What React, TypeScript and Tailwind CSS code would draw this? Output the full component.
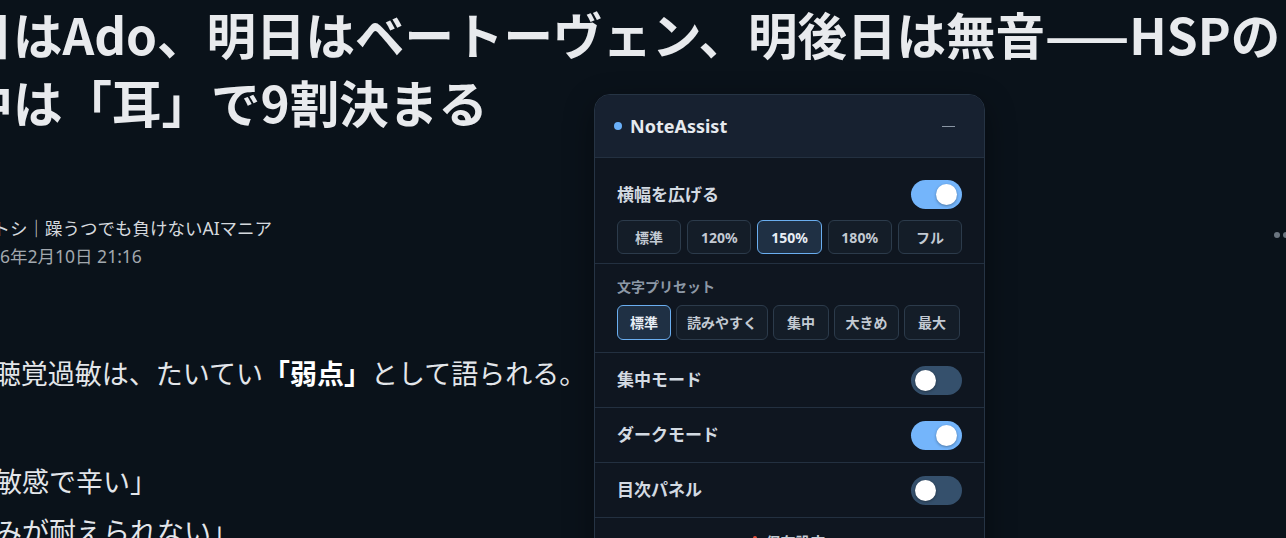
import { useState } from 'react';

const cjk = { fontFamily: '"Noto Sans CJK JP", "Noto Sans", sans-serif' };
const ui = { fontFamily: '"Noto Sans", "Noto Sans CJK JP", sans-serif' };

function Toggle({ on, onClick }: { on: boolean; onClick: () => void }) {
  return (
    <button
      onClick={onClick}
      className={`relative h-[29px] w-[51px] shrink-0 rounded-full ${on ? 'bg-[#74b5fb]' : 'bg-[#35506c]'}`}
    >
      <span
        className={`absolute top-[4px] h-[21px] w-[21px] rounded-full bg-white shadow-[0_1px_3px_rgba(0,0,0,0.35)] ${on ? 'right-[5px]' : 'left-[4px]'}`}
      />
    </button>
  );
}

const widths = ['標準', '120%', '150%', '180%', 'フル'];
const presets = ['標準', '読みやすく', '集中', '大きめ', '最大'];

function NoteAssist() {
  const [wide, setWide] = useState(true);
  const [width, setWidth] = useState('150%');
  const [preset, setPreset] = useState('標準');
  const [focus, setFocus] = useState(false);
  const [dark, setDark] = useState(true);
  const [toc, setToc] = useState(false);

  const rows = [
    { label: '集中モード', on: focus, set: setFocus },
    { label: 'ダークモード', on: dark, set: setDark },
    { label: '目次パネル', on: toc, set: setToc },
  ];

  return (
    <div
      className="absolute left-[594px] top-[94px] w-[391px] overflow-hidden rounded-[16px] border border-[#263444] bg-[#0f1620] shadow-[0_10px_30px_rgba(0,0,0,0.4)]"
      style={ui}
    >
      <div className="flex h-[63px] items-center justify-between border-b border-[#233040] bg-[#172130] pl-[19px] pr-[29px]">
        <div className="flex items-center gap-[8px]">
          <span className="h-[8px] w-[8px] rounded-full bg-[#6ab0f9]" />
          <span className="text-[18px] font-bold text-[#e6eaef]">NoteAssist</span>
        </div>
        <span className="h-px w-[13px] bg-[#8a96a4]" />
      </div>

      <div className="border-b border-[#233040] px-[22px] pb-[9px] pt-[22px]">
        <div className="flex items-center justify-between">
          <span className="text-[17px] font-semibold text-[#d3dae2]">横幅を広げる</span>
          <Toggle on={wide} onClick={() => setWide(!wide)} />
        </div>
        <div className="mt-[11px] grid grid-cols-5 gap-[6px]">
          {widths.map((w) => (
            <button
              key={w}
              onClick={() => setWidth(w)}
              className={`h-[34px] rounded-[6px] border text-[14px] font-bold ${
                width === w
                  ? 'border-[#6aaef0] bg-[#1f3044] text-[#e8eef5]'
                  : 'border-[#2c3b4b] bg-[#141d28] text-[#c3cad3]'
              }`}
            >
              {w}
            </button>
          ))}
        </div>
      </div>

      <div className="border-b border-[#233040] px-[22px] pb-[12px] pt-[12px]">
        <div className="text-[14px] font-semibold text-[#8d98a6]">文字プリセット</div>
        <div className="mt-[8px] grid grid-cols-[54px_92px_56px_65px_56px] gap-[5px]">
          {presets.map((p) => (
            <button
              key={p}
              onClick={() => setPreset(p)}
              className={`h-[35px] rounded-[6px] border text-[14px] font-bold ${
                preset === p
                  ? 'border-[#6aaef0] bg-[#1f3044] text-[#e8eef5]'
                  : 'border-[#2c3b4b] bg-[#141d28] text-[#c3cad3]'
              }`}
            >
              {p}
            </button>
          ))}
        </div>
      </div>

      {rows.map((r) => (
        <div
          key={r.label}
          className="flex h-[55px] items-center justify-between border-b border-[#233040] px-[22px]"
        >
          <span className="text-[17px] font-semibold text-[#d3dae2]">{r.label}</span>
          <Toggle on={r.on} onClick={() => r.set(!r.on)} />
        </div>
      ))}

      <div className="flex items-start justify-center gap-[8px] pb-[16px] pt-[13px]">
        <span className="mt-[5px] h-[10px] w-[4px] rounded-full bg-[#e0503a]" />
        <span className="text-[15px] font-semibold text-[#c3cad3]">保存設定</span>
      </div>
    </div>
  );
}

export default function App() {
  return (
    <div className="relative h-[538px] w-[1286px] overflow-hidden bg-[#0a121a]" style={cjk}>
      <article className="-ml-[86px] w-[1386px]">
        <h1 className="text-[49.5px] font-bold leading-[68px] text-[#e8eaed]">
          <span className="block whitespace-nowrap">今日はAdo、明日はベートーヴェン、明後日は無音——HSPの</span>
          <span className="block whitespace-nowrap">集中は「耳」で9割決まる</span>
        </h1>

        <div className="mt-[80px] flex items-center gap-[13px]">
          <div className="h-[48px] w-[48px] shrink-0 rounded-full bg-[#3a4652]" />
          <div className="flex flex-col gap-[3px] text-[17.5px] leading-[25px]" style={ui}>
            <span className="text-[#d5d9de]">ヒトシ｜躁うつでも負けないAIマニア</span>
            <span className="-ml-[5px] text-[#a2a8ae]">2026年2月10日 21:16</span>
          </div>
          <div className="mb-[16px] ml-auto flex gap-[3px] pr-[2px]">
            <span className="h-[6px] w-[6px] rounded-full bg-[#6b7580]" />
            <span className="h-[6px] w-[6px] rounded-full bg-[#6b7580]" />
            <span className="h-[6px] w-[6px] rounded-full bg-[#6b7580]" />
          </div>
        </div>

        <div className="mt-[79px] text-[27px] leading-[50px] text-[#e3e6ea]">
          <p>
            HSPの聴覚過敏は、たいてい<strong className="font-bold text-white">「弱点」</strong>として語られる。
          </p>
          <p className="mt-[58px]">
            「音に敏感で辛い」
            <br />
            「人混みが耐えられない」
          </p>
        </div>
      </article>
      <NoteAssist />
    </div>
  );
}
